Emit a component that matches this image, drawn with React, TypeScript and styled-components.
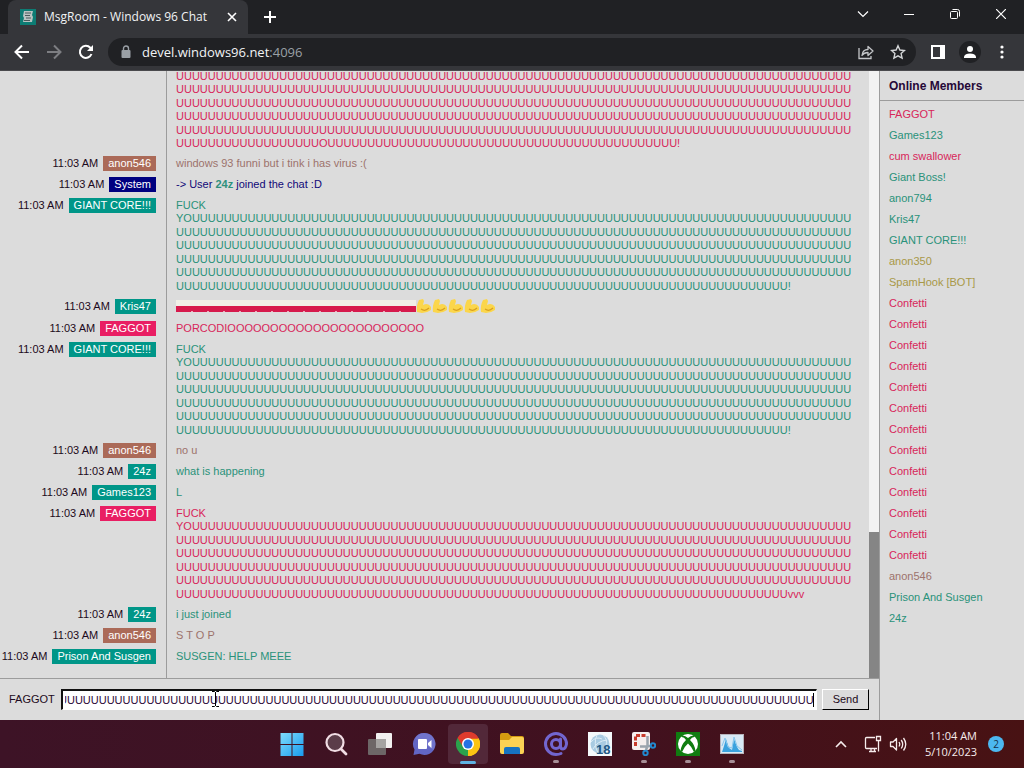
import React, { useLayoutEffect, useRef } from "react";
import styled, { createGlobalStyle } from "styled-components";

const GlobalStyle = createGlobalStyle`
  * { box-sizing: border-box; }
  html, body { margin: 0; padding: 0; }
  body { background: #dcdcdc; overflow: hidden; }
  button { font: inherit; color: inherit; cursor: default; }
`;

const ui = `"Open Sans", "Noto Sans", sans-serif`;
const pixel = `"Liberation Sans", Arial, sans-serif`;

const PINK = "#e91e63";
const TEAL = "#009688";
const BROWN = "#ab6a58";
const NAVY = "#000080";
const OLIVE = "#a89848";

/* ---------- window ---------- */

const Screen = styled.div`
  display: flex;
  flex-direction: column;
  height: 100vh;
  min-height: 480px;
  font-family: ${ui};
`;

const TabStrip = styled.div`
  display: flex;
  align-items: stretch;
  height: 34px;
  padding-left: 8px;
  background: #202124;
  color: #fff;
`;

const Tab = styled.div`
  display: flex;
  align-items: center;
  width: 240px;
  padding: 0 10px 0 12px;
  background: #35363a;
  border-radius: 8px 8px 0 0;
  font-size: 12px;
  line-height: 18px;
`;

const TabTitle = styled.span`
  flex: 1;
  margin-left: 8px;
  white-space: nowrap;
  color: #f1f3f4;
`;

const IconButton = styled.button<{ $w?: number }>`
  display: flex;
  align-items: center;
  justify-content: center;
  width: ${(p) => p.$w ?? 32}px;
  padding: 0;
  border: 0;
  background: none;
  flex: none;
`;

const WindowControls = styled.div`
  display: flex;
  margin-left: auto;
  padding-bottom: 6px;
`;

const Toolbar = styled.div`
  display: flex;
  align-items: center;
  height: 37px;
  padding: 0 6px;
  background: #35363a;
  border-bottom: 1px solid #4a4a4d;
`;

const AddressBar = styled.div`
  display: flex;
  flex: 1;
  align-items: center;
  height: 28px;
  margin: 0 6px;
  padding: 0 2px 0 12px;
  border-radius: 14px;
  background: #202124;
  color: #f1f3f4;
  font-size: 13px;
  line-height: 20px;
`;

const Address = styled.span`
  flex: 1;
  margin-left: 10px;
`;

const Port = styled.span`
  color: #9aa0a6;
`;

/* ---------- chat page ---------- */

const Page = styled.div`
  display: flex;
  flex: 1;
  min-height: 0;
  background: #dcdcdc;
  color: #1c0a20;
  font-family: ${pixel};
  font-size: 11px;
  line-height: 15px;
`;

const Main = styled.main`
  display: flex;
  flex: 1;
  flex-direction: column;
  min-width: 0;
`;

const History = styled.div`
  display: flex;
  flex: 1;
  min-height: 0;
`;

const Feed = styled.div`
  display: flex;
  flex: 1;
  flex-direction: column;
  justify-content: flex-end;
  gap: 6px;
  min-width: 0;
  padding-bottom: 14px;
  overflow: hidden;
  background: linear-gradient(#9c9c9c, #9c9c9c) 166px 0 / 1px 100% no-repeat;
`;

const Row = styled.div`
  display: grid;
  flex: none;
  grid-template-columns: 156px 1fr;
  column-gap: 20px;
  align-items: start;
`;

const Meta = styled.div`
  display: flex;
  justify-content: flex-end;
  gap: 5px;
  white-space: nowrap;
`;

const Badge = styled.span<{ $color: string }>`
  padding: 0 5px;
  background: ${(p) => p.$color};
  color: #fff;
`;

const Body = styled.div<{ $color: string }>`
  color: ${(p) => p.$color};
  white-space: nowrap;
`;

const Mention = styled.b`
  color: #2f917c;
`;

const Line = styled.div`
  line-height: 14px;
  &:nth-child(even) {
    line-height: 13px;
  }
`;

const EmojiStrip = styled.svg`
  display: block;
  width: 320px;
  height: 16px;
`;

const ScrollTrack = styled.div`
  display: flex;
  flex-direction: column;
  justify-content: flex-end;
  width: 10px;
  background: #f2f2f2;
`;

const ScrollThumb = styled.div`
  height: 24%;
  background: #858585;
`;

const Composer = styled.form`
  display: flex;
  align-items: center;
  height: 42px;
  padding: 0 10px 0 9px;
  border-top: 1px solid #9c9c9c;
`;

const InputWrap = styled.div`
  position: relative;
  flex: 1;
  margin: 0 5px 0 6px;
`;

const MessageInput = styled.input`
  display: block;
  width: 100%;
  height: 21px;
  padding: 0 2px;
  border: 1px solid #fff;
  border-top: 2px solid #111;
  border-left: 2px solid #111;
  outline: none;
  background: #fff;
  color: #2c0838;
  font: inherit;
`;

const Caret = styled.span`
  position: absolute;
  top: 4px;
  right: 3px;
  width: 1px;
  height: 14px;
  background: #000;
`;

const Pointer = styled.svg`
  position: absolute;
  top: 1px;
  left: 150px;
`;

const SendButton = styled.button`
  width: 47px;
  height: 21px;
  padding: 0;
  border: 1px solid #fff;
  border-right-color: #000;
  border-bottom-color: #000;
  background: #dcdcdc;
`;

const Members = styled.aside`
  flex: none;
  width: 145px;
  border-left: 1px solid #9c9c9c;
`;

const MembersTitle = styled.h2`
  margin: 0;
  padding: 8px 9px 6px;
  border-bottom: 1px solid #9c9c9c;
  font-size: 12px;
  line-height: 15px;
  color: #260838;
`;

const MemberList = styled.ul`
  margin: 0;
  padding: 3px 9px;
  list-style: none;
`;

const Member = styled.li<{ $color: string }>`
  line-height: 21px;
  color: ${(p) => p.$color};
`;

/* ---------- taskbar ---------- */

const Taskbar = styled.footer`
  display: grid;
  flex: none;
  grid-template-columns: 1fr auto 1fr;
  height: 48px;
  background: linear-gradient(90deg, #3d1326, #41111f 60%, #481213);
  color: #f6ecec;
`;

const Apps = styled.div`
  display: flex;
  grid-column: 2;
  align-items: center;
`;

const AppButton = styled.button<{ $state?: "active" | "open" }>`
  position: relative;
  display: flex;
  align-items: center;
  justify-content: center;
  width: 40px;
  height: 40px;
  margin: 0 2px;
  padding: 0;
  border: 0;
  border-radius: 4px;
  background: ${(p) => (p.$state === "active" ? "#522839" : "none")};
  &::after {
    content: "";
    position: absolute;
    bottom: ${(p) => (p.$state === "active" ? 0 : 1)}px;
    width: ${(p) => (p.$state === "active" ? 16 : p.$state ? 6 : 0)}px;
    height: 3px;
    border-radius: 2px;
    background: ${(p) => (p.$state === "active" ? "#5fb2e2" : "#a78f97")};
  }
`;

const Tray = styled.div`
  display: flex;
  align-items: center;
  justify-content: flex-end;
  padding-right: 20px;
`;

const Clock = styled.div`
  margin: 0 11px 0 18px;
  font-size: 11px;
  line-height: 16px;
  text-align: right;
`;

const Notice = styled.span`
  display: flex;
  align-items: center;
  justify-content: center;
  width: 16px;
  height: 16px;
  border-radius: 8px;
  background: #4cb8f0;
  color: #14304a;
  font-size: 10px;
  line-height: 16px;
`;

/* ---------- data ---------- */

const us = (n: number) => "U".repeat(n);
const wall = (end: string) => [
  "FUCK",
  "YO" + us(83),
  us(85),
  us(85),
  us(85),
  us(85),
  us(77) + end,
];

type Message = {
  from?: string;
  color: string;
  lines?: string[];
  node?: React.ReactNode;
};

const arm =
  "M3 1 L7 0 L8 2 L7 6 Q12 3 15 8 L15 11 Q11 14 6 14 L1 13 Q0 7 3 1Z";

const flags = (
  <EmojiStrip viewBox="0 0 320 16" aria-label="flags and flexed arms">
    <rect y="1" width="240" height="6" fill="#f1efe7" />
    <rect y="7" width="240" height="6" fill="#d61a4c" />
    {Array.from({ length: 14 }, (_, i) => (
      <rect key={i} x={i * 16 + 15} y="12" width="2" height="1" fill="#f0a8b8" />
    ))}
    {Array.from({ length: 5 }, (_, i) => (
      <g key={i} transform={`translate(${240 + i * 16} 0)`}>
        <path d={arm} fill="#fbd64b" />
        <path d="M5 10 Q9 13 13 9" fill="none" stroke="#d9a01e" strokeWidth="1.2" />
      </g>
    ))}
  </EmojiStrip>
);

const messages: Message[] = [
  {
    color: PINK,
    lines: [us(85), us(85), us(85), us(85), us(85), us(18) + "O" + us(44) + "!"],
  },
  { from: "anon546", color: BROWN, node: "windows 93 funni but i tink i has virus :(" },
  {
    from: "System",
    color: NAVY,
    node: (
      <>
        -&gt; User <Mention>24z</Mention> joined the chat :D
      </>
    ),
  },
  { from: "GIANT CORE!!!", color: TEAL, lines: wall("!") },
  { from: "Kris47", color: TEAL, node: flags },
  { from: "FAGGOT", color: PINK, node: "PORCODI" + "O".repeat(23) },
  { from: "GIANT CORE!!!", color: TEAL, lines: wall("!") },
  { from: "anon546", color: BROWN, node: "no u" },
  { from: "24z", color: TEAL, node: "what is happening" },
  { from: "Games123", color: TEAL, node: "L" },
  { from: "FAGGOT", color: PINK, lines: wall("vvv") },
  { from: "24z", color: TEAL, node: "i just joined" },
  { from: "anon546", color: BROWN, node: "S T O P" },
  { from: "Prison And Susgen", color: TEAL, node: "SUSGEN: HELP MEEE" },
];

const textTone: Record<string, string> = {
  [PINK]: "#d8265a",
  [TEAL]: "#2a927a",
  [BROWN]: "#9c736c",
  [NAVY]: "#100878",
  [OLIVE]: OLIVE,
};

const members: [string, string][] = [
  ["FAGGOT", PINK],
  ["Games123", TEAL],
  ["cum swallower", PINK],
  ["Giant Boss!", TEAL],
  ["anon794", TEAL],
  ["Kris47", TEAL],
  ["GIANT CORE!!!", TEAL],
  ["anon350", OLIVE],
  ["SpamHook [BOT]", OLIVE],
  ...Array.from({ length: 13 }, (): [string, string] => ["Confetti", PINK]),
  ["anon546", BROWN],
  ["Prison And Susgen", TEAL],
  ["24z", TEAL],
];

/* ---------- icons ---------- */

const Svg = ({ s = 16, w = 1.5, c = "#fff", children }: { s?: number; w?: number; c?: string; children: React.ReactNode }) => (
  <svg width={s} height={s} viewBox={`0 0 ${s} ${s}`} fill="none" stroke={c} strokeWidth={w} aria-hidden="true">
    {children}
  </svg>
);

const Favicon = () => (
  <svg width="16" height="16" viewBox="0 0 16 16" aria-hidden="true">
    <rect width="16" height="16" fill="#0d7c74" />
    <path d="M4 2h9l-1 4 1 2-1 5H3l1-4-1-2z" fill="#b9c3c2" />
    <path d="M5 4h6M5 6.500h5M6 9h5M4 11.500h6" stroke="#4a5a5c" strokeWidth="1" />
  </svg>
);

const WindowsLogo = () => (
  <svg width="24" height="24" viewBox="0 0 24 24" aria-hidden="true">
    <defs>
      <linearGradient id="win" x2="1" y2="1">
        <stop stopColor="#7fdcfb" />
        <stop offset="1" stopColor="#189bee" />
      </linearGradient>
    </defs>
    <path d="M.5 1h11v11H.5zM12.500 1h11v11h-11zM.5 13h11v11H.5zM12.500 13h11v11h-11z" fill="url(#win)" />
  </svg>
);

const SearchIcon = () => (
  <svg width="24" height="24" viewBox="0 0 24 24" aria-hidden="true">
    <circle cx="11" cy="10.500" r="8.500" fill="#5b3d49" stroke="#f1dde4" strokeWidth="2.200" />
    <path d="M17 17l5 5" stroke="#f1dde4" strokeWidth="2.800" strokeLinecap="round" />
  </svg>
);

const TaskView = () => (
  <svg width="26" height="24" viewBox="0 0 26 24" aria-hidden="true">
    <rect x="9" y="1" width="16" height="15" rx="1" fill="#f2f0f0" />
    <rect x="1" y="7" width="18" height="16" rx="1" fill="#6d6667" />
    <path d="M9 7h10v9H9z" fill="#a5a3a2" />
  </svg>
);

const ChatIcon = () => (
  <svg width="24" height="24" viewBox="0 0 24 24" aria-hidden="true">
    <path d="M12.500 1a11 11 0 1 1-5 20.800L1.500 23l1-5.500A11 11 0 0 1 12.500 1z" fill="#6266c4" />
    <path d="M12.500 1a11 11 0 0 1 9 17L3 6.500A11 11 0 0 1 12.500 1z" fill="#7f82d4" opacity=".5" />
    <rect x="6" y="7" width="9" height="10" rx="1" fill="#fff" />
    <path d="M16 11l3.500-3v8L16 13z" fill="#fff" />
  </svg>
);

const ChromeIcon = () => (
  <svg width="24" height="24" viewBox="0 0 24 24" aria-hidden="true">
    <path d="M12 12L1.600 6A12 12 0 0 1 22.400 6z" fill="#dd3b2d" />
    <path d="M12 12L22.400 6A12 12 0 0 1 12 24z" fill="#fbc413" />
    <path d="M12 12v12A12 12 0 0 1 1.600 6z" fill="#2ba24c" />
    <path d="M12 6.500h10.700A12 12 0 0 1 12 24l4.800-9.300z" fill="#fbc413" />
    <path d="M1.600 6A12 12 0 0 1 22.700 6.500H12L7 14.800z" fill="#dd3b2d" />
    <circle cx="12" cy="12" r="6" fill="#fff" />
    <circle cx="12" cy="12" r="4.500" fill="#2472e4" />
  </svg>
);

const FolderIcon = () => (
  <svg width="24" height="24" viewBox="0 0 24 24" aria-hidden="true">
    <path d="M0 3q0-2 2-2h6l3 3h11q2 0 2 2v4H0z" fill="#d59b10" />
    <path d="M0 8h9l3-3h10q2 0 2 2v13q0 2-2 2H2q-2 0-2-2z" fill="#fbd254" />
    <path d="M4 22v-5q0-2 2-2h12q2 0 2 2v5z" fill="#1673c2" />
  </svg>
);

const AtIcon = () => (
  <svg width="26" height="26" viewBox="0 0 26 26" fill="none" stroke="#7266cf" aria-hidden="true">
    <circle cx="13" cy="13" r="4.500" strokeWidth="3" />
    <path d="M17.500 8v7q0 3 2.500 3t3.500-5A10.500 10.500 0 1 0 13 23.500q3 0 5-1" strokeWidth="3" strokeLinecap="round" />
  </svg>
);

const Globe18 = () => (
  <svg width="24" height="24" viewBox="0 0 24 24" aria-hidden="true">
    <rect width="24" height="24" fill="#f5f9fc" />
    <circle cx="12" cy="12" r="9.500" fill="#a9cbe2" />
    <path d="M3 10q5-6 11-3M5 17q4-8 14-9M9 3q-4 8 1 18M15 3q5 5 3 10" fill="none" stroke="#dcecf6" />
    <text x="8" y="22" fontFamily="Liberation Sans" fontWeight="bold" fontSize="13" fill="#215784">
      18
    </text>
  </svg>
);

const SnipIcon = () => (
  <svg width="24" height="24" viewBox="0 0 24 24" aria-hidden="true">
    <rect width="18" height="18" rx="2" fill="#f5eeee" />
    <path d="M3.500 14V3.500H14" fill="none" stroke="#c73a2c" strokeWidth="3" strokeDasharray="4 1.500" />
    <path d="M15.500 4v10l-1.500 4M8 14.500h7l3-.5" fill="none" stroke="#9aa3ad" strokeWidth="2.500" />
    <g fill="none" stroke="#2289cf" strokeWidth="2">
      <circle cx="21" cy="13.500" r="2.200" />
      <circle cx="13.500" cy="21" r="2.200" />
    </g>
  </svg>
);

const XboxIcon = () => (
  <svg width="24" height="24" viewBox="0 0 24 24" aria-hidden="true">
    <rect width="24" height="24" fill="#107c10" />
    <circle cx="12" cy="12" r="10" fill="#fff" />
    <path d="M6.500 3.500q3 0 5.500 2.500 2.500-2.500 5.500-2.500L19 5q-3-.5-5 3 5 5 5.500 11L18 20q-2-5-6-8.500Q8 15 6 20l-1.500-1Q5 13 10 8 8 4.500 5 5z" fill="#107c10" />
  </svg>
);

const MonitorIcon = () => (
  <svg width="24" height="20" viewBox="0 0 24 20" aria-hidden="true">
    <rect x=".5" y=".5" width="23" height="19" fill="#d8e9f5" stroke="#b7b4bb" />
    <path d="M2 18l2-6 2-7 3 9 3 2 2-11 3 8 2 3 3 1v1z" fill="#3ba2de" />
    <path d="M2 12l3-8 3 9 4 1 2-11 3 9 5 4" fill="none" stroke="#86c6ec" />
  </svg>
);

/* ---------- app ---------- */

const apps: [string, React.ReactNode, ("active" | "open")?][] = [
  ["Start", <WindowsLogo />],
  ["Search", <SearchIcon />],
  ["Task view", <TaskView />],
  ["Chat", <ChatIcon />],
  ["Chrome", <ChromeIcon />, "active"],
  ["File Explorer", <FolderIcon />],
  ["Mail", <AtIcon />, "open"],
  ["Globe 18", <Globe18 />],
  ["Snipping Tool", <SnipIcon />, "open"],
  ["Xbox", <XboxIcon />, "open"],
  ["Monitor", <MonitorIcon />, "open"],
];

export default function App() {
  const input = useRef<HTMLInputElement>(null);
  useLayoutEffect(() => {
    if (input.current) input.current.scrollLeft = input.current.scrollWidth;
  }, []);

  return (
    <Screen>
      <GlobalStyle />
      <TabStrip>
        <Tab>
          <Favicon />
          <TabTitle>MsgRoom - Windows 96 Chat</TabTitle>
          <IconButton $w={12} aria-label="Close tab">
            <Svg s={10} w={1.6}><path d="M1 1l8 8M9 1l-8 8" /></Svg>
          </IconButton>
        </Tab>
        <IconButton $w={44} aria-label="New tab">
          <Svg s={12} w={2}><path d="M6 0v12M0 6h12" /></Svg>
        </IconButton>
        <WindowControls>
          <IconButton $w={46} aria-label="Search tabs">
            <Svg s={12} w={1.2}><path d="M1 3.500l5 5 5-5" /></Svg>
          </IconButton>
          <IconButton $w={46} aria-label="Minimize">
            <Svg s={10} w={1}><path d="M0 5.500h10" /></Svg>
          </IconButton>
          <IconButton $w={46} aria-label="Restore">
            <Svg s={10} w={1}>
              <rect x=".5" y="2.500" width="7" height="7" rx="1" />
              <path d="M2.500 .5h5a2 2 0 0 1 2 2v5" />
            </Svg>
          </IconButton>
          <IconButton $w={46} aria-label="Close">
            <Svg s={10} w={1.2}><path d="M0 0l10 10M10 0L0 10" /></Svg>
          </IconButton>
        </WindowControls>
      </TabStrip>

      <Toolbar>
        <IconButton aria-label="Back">
          <Svg w={2}><path d="M15 8H2M8 1.500L1.500 8 8 14.500" /></Svg>
        </IconButton>
        <IconButton aria-label="Forward">
          <Svg w={2} c="#7d7e82"><path d="M1 8h13M8 1.500L14.500 8 8 14.500" /></Svg>
        </IconButton>
        <IconButton aria-label="Reload">
          <Svg w={2}>
            <path d="M13.500 10A6 6 0 1 1 12.300 3.800L14 5.500" />
            <path d="M15 1v6H9z" fill="#fff" stroke="none" />
          </Svg>
        </IconButton>
        <AddressBar>
          <svg width="12" height="14" viewBox="0 0 12 14" aria-hidden="true">
            <rect x="1.500" y="5" width="9" height="8" rx="1" fill="#9aa0a6" />
            <path d="M3.500 5.500V3.500a2.500 2.500 0 0 1 5 0v2" fill="none" stroke="#9aa0a6" strokeWidth="1.400" />
          </svg>
          <Address>
            devel.windows96.net<Port>:4096</Port>
          </Address>
          <IconButton aria-label="Share">
            <Svg w={1.3} c="#c4c6c9">
              <path d="M1 4v10.500h12V12" />
              <path d="M4 11.500q.5-6 6-6V2.500L15 7l-5 4.500V8.500q-4 0-6 3z" strokeLinejoin="round" />
            </Svg>
          </IconButton>
          <IconButton aria-label="Bookmark">
            <Svg w={1.4} c="#d4d6d8">
              <path d="M8 1.800l1.900 4.200 4.600.5-3.400 3.100 1 4.500L8 11.800l-4.100 2.300 1-4.500L1.500 6.500l4.600-.5z" />
            </Svg>
          </IconButton>
        </AddressBar>
        <IconButton aria-label="Side panel">
          <Svg s={14} w={2}>
            <path d="M1 1h12v12H1z" />
            <path d="M9 1h4v12H9z" fill="#fff" stroke="none" />
          </Svg>
        </IconButton>
        <IconButton aria-label="Profile">
          <svg width="22" height="22" viewBox="0 0 22 22" aria-hidden="true">
            <circle cx="11" cy="11" r="11" fill="#202124" />
            <circle cx="11" cy="8" r="3" fill="#fff" />
            <path d="M5 17v-1.500Q6 12.500 11 12.500t6 3V17z" fill="#fff" />
          </svg>
        </IconButton>
        <IconButton aria-label="Menu">
          <svg width="4" height="14" viewBox="0 0 4 14" fill="#fff" aria-hidden="true">
            <circle cx="2" cy="2" r="1.600" />
            <circle cx="2" cy="7" r="1.600" />
            <circle cx="2" cy="12" r="1.600" />
          </svg>
        </IconButton>
      </Toolbar>

      <Page>
        <Main>
          <History>
            <Feed>
              {messages.map((m, i) => (
                <Row key={i}>
                  <Meta>
                    {m.from && (
                      <>
                        <span>11:03 AM</span>
                        <Badge $color={m.color}>{m.from}</Badge>
                      </>
                    )}
                  </Meta>
                  <Body $color={textTone[m.color]}>
                    {m.lines ? m.lines.map((l, k) => <Line key={k}>{l}</Line>) : m.node}
                  </Body>
                </Row>
              ))}
            </Feed>
            <ScrollTrack>
              <ScrollThumb />
            </ScrollTrack>
          </History>
          <Composer onSubmit={(e) => e.preventDefault()}>
            <label htmlFor="message">FAGGOT</label>
            <InputWrap>
              <MessageInput id="message" ref={input} defaultValue={us(110)} autoComplete="off" spellCheck={false} />
              <Caret />
              <Pointer width="9" height="18" viewBox="0 0 9 18" fill="none" stroke="#000" aria-hidden="true">
                <path d="M1 1.500h2.500l1 1 1-1H8M4.500 2v14M1 16.500h2.500l1-1 1 1H8" />
              </Pointer>
            </InputWrap>
            <SendButton type="submit">Send</SendButton>
          </Composer>
        </Main>
        <Members>
          <MembersTitle>Online Members</MembersTitle>
          <MemberList>
            {members.map(([name, color], i) => (
              <Member key={i} $color={textTone[color]}>
                {name}
              </Member>
            ))}
          </MemberList>
        </Members>
      </Page>

      <Taskbar>
        <Apps>
          {apps.map(([name, icon, state]) => (
            <AppButton key={name} aria-label={name} $state={state}>
              {icon}
            </AppButton>
          ))}
        </Apps>
        <Tray>
          <IconButton aria-label="Hidden icons">
            <Svg s={12} w={1.6} c="#f6ecec"><path d="M1 9l5-5 5 5" /></Svg>
          </IconButton>
          <IconButton aria-label="Network">
            <Svg s={18} w={1.3} c="#f6ecec">
              <path d="M11 2.500H2.500q-1 0-1 1v9q0 1 1 1H13M5 16.500h7M7 13.500v3M10.500 13.500v3" />
              <path d="M12.500 1.500h4v4h-4zM14.500 5.500v11" />
            </Svg>
          </IconButton>
          <IconButton $w={18} aria-label="Volume">
            <Svg s={18} w={1.3} c="#f6ecec">
              <path d="M1.500 7v4.500h2.500l3.500 3.500V3.500L4 7z" strokeLinejoin="round" />
              <path d="M10 7q1.500 2.200 0 4.500M12.200 5q3 4.200 0 8.500M14.500 3q4.500 6.200 0 12.500" />
            </Svg>
          </IconButton>
          <Clock>
            11:04 AM
            <br />
            5/10/2023
          </Clock>
          <Notice>2</Notice>
        </Tray>
      </Taskbar>
    </Screen>
  );
}
